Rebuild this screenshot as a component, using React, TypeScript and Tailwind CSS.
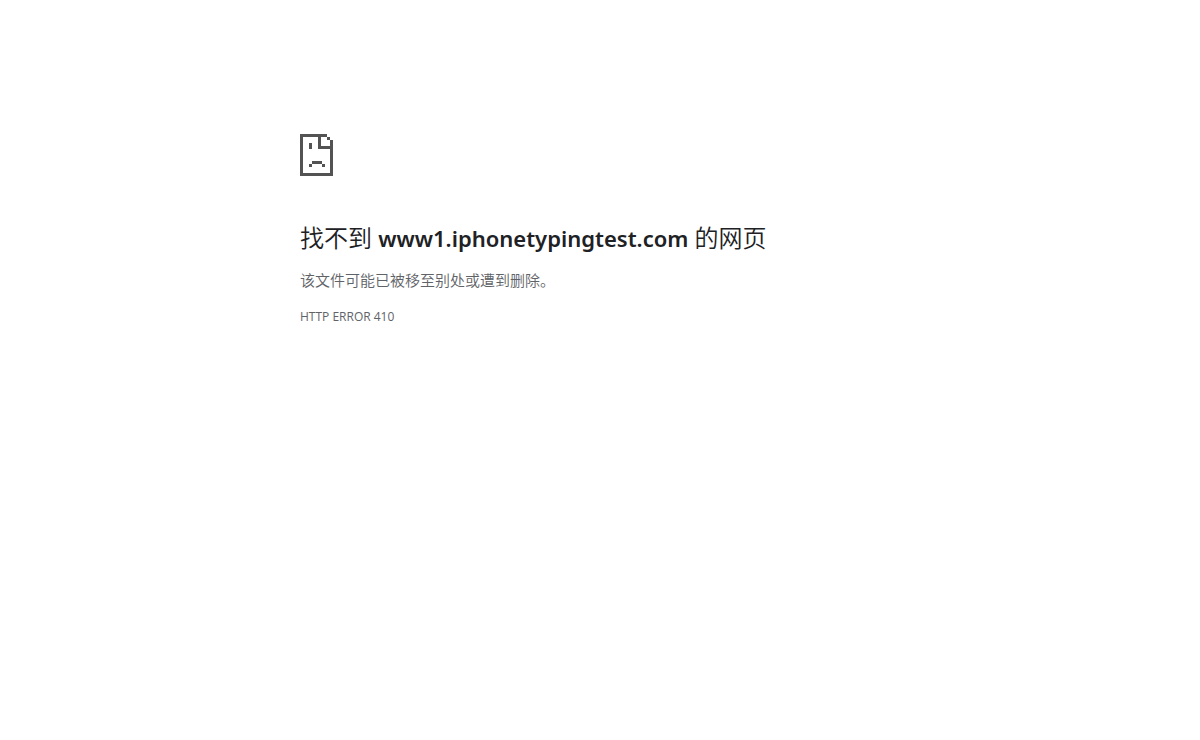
export default function App() {
  return (
    <main className="min-h-screen bg-white px-6 pt-[134px] font-['Open_Sans','Noto_Sans_CJK_SC',sans-serif] text-[#5f6368]">
      <div className="mx-auto max-w-[600px]">
        <svg
          className="block h-[42px] w-[33px]"
          viewBox="0 0 33 42"
          fill="#535353"
          shapeRendering="crispEdges"
          role="img"
          aria-label="网页错误"
        >
          <path d="M0 0h27v3H3v36h27V15H18V3h3v9h9V6h3v36H0z" />
          <path d="M27 3h3v3h-3zM9 9h3v6H9zM12 27h10v3H12zM9 30h3v3H9zM22 30h3v3h-3z" />
        </svg>
        <h1 className="mt-12 text-[24px] leading-7 font-[350] text-[#202124]">
          找不到{' '}
          <strong className="font-['Noto_Sans',sans-serif] text-[22px] font-semibold">www1.iphonetypingtest.com</strong>{' '}
          的网页
        </h1>
        <p className="mt-4 text-[15px] leading-6 font-[350]">该文件可能已被移至别处或遭到删除。</p>
        <p className="mt-4 text-[12px] leading-[18px]">HTTP ERROR 410</p>
      </div>
    </main>
  );
}
